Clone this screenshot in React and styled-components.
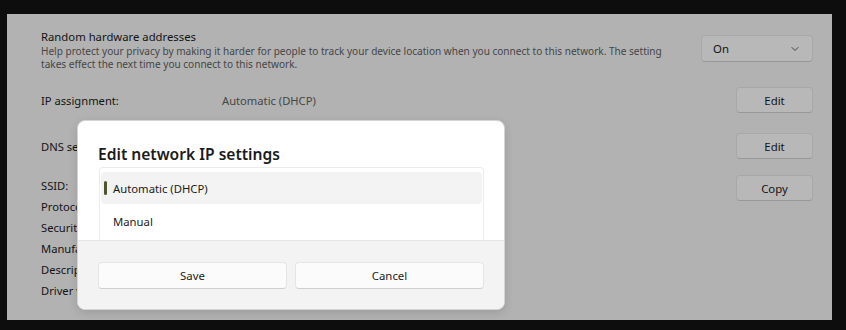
import React from 'react';
import styled, { createGlobalStyle } from 'styled-components';

const Global = createGlobalStyle`
    html, body { margin: 0; padding: 0; background: #0d0d0d; }
    body { font-family: "Noto Sans", "Open Sans", sans-serif; }
    * { box-sizing: border-box; }
`;

const Frame = styled.div`
    width: 846px;
    height: 330px;
    padding: 14px 14px 10px 7px;
    background: #0d0d0d;
`;

const Window = styled.div`
    position: relative;
    height: 306px;
    background: #f3f3f3;
    padding: 14px 19px 0 34px;
    overflow: hidden;
    color: #1b1b1b;
    font-size: 11.2px;
`;

const TopSetting = styled.div`
    display: flex;
    align-items: flex-start;
    justify-content: space-between;
`;

const SettingText = styled.div`
    display: flex;
    flex-direction: column;
`;

const SettingTitle = styled.div`
    font-size: 11.3px;
    line-height: 17px;
`;

const SettingDesc = styled.div`
    font-size: 10.05px;
    line-height: 13px;
    color: #5f5f5f;
    width: 636px;
`;

const Dropdown = styled.div`
    width: 112px;
    height: 27px;
    margin-top: 7px;
    display: flex;
    align-items: center;
    justify-content: space-between;
    padding: 0 12px 0 11px;
    background: #fbfbfb;
    border: 1px solid #e5e5e5;
    border-bottom-color: #cfcfcf;
    border-radius: 4px;
    font-size: 11.4px;
`;

const PropRow = styled.div`
    display: grid;
    grid-template-columns: 181px 1fr auto;
    align-items: center;
    margin-top: ${p => p.$top || 0}px;
`;

const Value = styled.span`
    color: #5f5f5f;
`;

const Button = styled.button`
    width: 77px;
    height: 26px;
    font-family: inherit;
    font-size: 11.4px;
    color: #1b1b1b;
    background: #fbfbfb;
    border: 1px solid #e5e5e5;
    border-bottom-color: #cfcfcf;
    border-radius: 4px;
    padding: 0;
`;

const PropBlock = styled.div`
    display: grid;
    grid-template-columns: 1fr auto;
    align-items: start;
    margin-top: 16px;
`;

const InfoList = styled.div`
    display: flex;
    flex-direction: column;
`;

const InfoLine = styled.div`
    height: 21px;
    line-height: 21px;
`;

const Overlay = styled.div`
    position: absolute;
    inset: 0;
    background: rgba(0, 0, 0, 0.265);
`;

const Dialog = styled.div`
    position: absolute;
    left: 70px;
    top: 106px;
    width: 428px;
    height: 190px;
    background: #ffffff;
    border-radius: 8px;
    border: 1px solid #d4d4d4;
    box-shadow: 0 3px 10px rgba(0, 0, 0, 0.12);
    overflow: hidden;
    display: flex;
    flex-direction: column;
`;

const DialogBody = styled.div`
    height: 119px;
    flex-shrink: 0;
    padding: 21px 20px 0 20px;
    overflow: hidden;
`;

const DialogTitle = styled.div`
    font-size: 15.6px;
    font-weight: 600;
    line-height: 24px;
    color: #1b1b1b;
`;

const ListBox = styled.div`
    margin: 1px 0 0 1px;
    height: 90px;
    border: 1px solid #ececec;
    border-bottom: none;
    border-radius: 4px 4px 0 0;
    padding: 4px 0 0 0;
`;

const ListItem = styled.div`
    position: relative;
    height: 32px;
    margin: 0 1px 1px 1px;
    display: flex;
    align-items: center;
    padding-left: 12px;
    border-radius: 4px;
    font-size: 11.3px;
    color: #1b1b1b;
    background: ${p => (p.$selected ? '#f3f3f3' : 'transparent')};

    &::before {
        content: '';
        display: ${p => (p.$selected ? 'block' : 'none')};
        position: absolute;
        left: 3px;
        top: 9px;
        width: 3px;
        height: 14px;
        border-radius: 2px;
        background: #4e5530;
    }
`;

const DialogFooter = styled.div`
    flex: 1;
    background: #f3f3f3;
    border-top: 1px solid #e5e5e5;
    display: grid;
    grid-template-columns: 1fr 1fr;
    align-content: start;
    gap: 8px;
    padding: 21px 20px 0 20px;
`;

const FooterButton = styled(Button)`
    width: 100%;
    height: 27px;
`;

const Chevron = () => (
    <svg width="10" height="10" viewBox="0 0 10 10" fill="none">
        <path d="M2 3.5 L5 6.5 L8 3.5" stroke="#5a5a5a" strokeWidth="1" strokeLinecap="round" strokeLinejoin="round" />
    </svg>
);

const info = ['SSID:', 'Protocol:', 'Security type:', 'Manufacturer:', 'Description:', 'Driver version:'];

const App = () => {
    return (
        <Frame>
            <Global />
            <Window>
                <TopSetting>
                    <SettingText>
                        <SettingTitle>Random hardware addresses</SettingTitle>
                        <SettingDesc>
                            Help protect your privacy by making it harder for people to track your device location when you connect to this network. The setting takes effect the next time you connect to this network.
                        </SettingDesc>
                    </SettingText>
                    <Dropdown>
                        <span>On</span>
                        <Chevron />
                    </Dropdown>
                </TopSetting>

                <PropRow $top={16}>
                    <span>IP assignment:</span>
                    <Value>Automatic (DHCP)</Value>
                    <Button>Edit</Button>
                </PropRow>
                <PropRow $top={20}>
                    <span>DNS server assignment:</span>
                    <Value>Automatic (DHCP)</Value>
                    <Button>Edit</Button>
                </PropRow>
                <PropBlock>
                    <InfoList>
                        {info.map(label => (
                            <InfoLine key={label}>{label}</InfoLine>
                        ))}
                    </InfoList>
                    <Button>Copy</Button>
                </PropBlock>

                <Overlay />
                <Dialog>
                    <DialogBody>
                        <DialogTitle>Edit network IP settings</DialogTitle>
                        <ListBox>
                            <ListItem $selected>Automatic (DHCP)</ListItem>
                            <ListItem>Manual</ListItem>
                        </ListBox>
                    </DialogBody>
                    <DialogFooter>
                        <FooterButton>Save</FooterButton>
                        <FooterButton>Cancel</FooterButton>
                    </DialogFooter>
                </Dialog>
            </Window>
        </Frame>
    );
};

export default App;
